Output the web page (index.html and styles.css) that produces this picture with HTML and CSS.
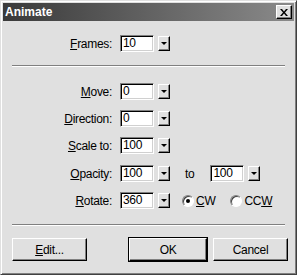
FILE: index.html
```html
<!DOCTYPE html>
<html lang="en">
<head>
  <meta charset="UTF-8">
  <title>Animate</title>
  <link rel="stylesheet" href="styles.css">
</head>
<body>
  <div class="window">
    <div class="titlebar">
      <span class="title">Animate</span>
      <button class="close-btn">
        <svg width="8" height="7" viewBox="0 0 8 7">
          <path d="M0 0 L2 0 L4 2.5 L6 0 L8 0 L5 3.5 L8 7 L6 7 L4 4.5 L2 7 L0 7 L3 3.5 Z" fill="#000"/>
        </svg>
      </button>
    </div>

    <div class="content">
      <div class="row row-frames">
        <label class="label"><u>F</u>rames:</label>
        <div class="field">10</div>
        <span class="drop"></span>
      </div>

      <div class="sep sep-top"></div>

      <div class="row row-first">
        <label class="label"><u>M</u>ove:</label>
        <div class="field">0</div>
        <span class="drop"></span>
      </div>
      <div class="row">
        <label class="label"><u>D</u>irection:</label>
        <div class="field">0</div>
        <span class="drop"></span>
      </div>
      <div class="row">
        <label class="label"><u>S</u>cale to:</label>
        <div class="field">100</div>
        <span class="drop"></span>
      </div>
      <div class="row row-opacity">
        <label class="label"><u>O</u>pacity:</label>
        <div class="field">100</div>
        <span class="drop"></span>
        <span class="to">to</span>
        <div class="field">100</div>
        <span class="drop"></span>
      </div>
      <div class="row">
        <label class="label"><u>R</u>otate:</label>
        <div class="field">360</div>
        <span class="drop"></span>
        <span class="radio checked"></span>
        <span class="radio-text"><u>C</u>W</span>
        <span class="radio radio-ccw"></span>
        <span class="radio-text">CC<u>W</u></span>
      </div>

      <div class="sep sep-bottom"></div>

      <div class="buttons">
        <button class="btn"><u>E</u>dit...</button>
        <span class="spacer"></span>
        <button class="btn btn-default">OK</button>
        <button class="btn">Cancel</button>
      </div>
    </div>
  </div>
</body>
</html>
```

FILE: styles.css
```css
body {
  margin: 0;
  background: #e0e0e0;
  font-family: "Liberation Sans", Arial, sans-serif;
  font-size: 12px;
  letter-spacing: -0.3px;
  color: #000;
}
.window {
  width: 297px;
  height: 275px;
  box-sizing: border-box;
  border: 1px solid;
  border-color: #e0e0e0 #404040 #404040 #e0e0e0;
  box-shadow: inset 1px 1px #fff, inset -1px -1px #808080;
  padding: 2px;
  background: #e0e0e0;
}
.titlebar {
  height: 18px;
  display: flex;
  align-items: center;
  justify-content: space-between;
  padding: 0 2px 0 2px;
  background: linear-gradient(90deg, #3a3a3a 0%, #8a8a8a 100%);
}
.title {
  color: #fff;
  font-weight: bold;
  font-size: 12px;
  letter-spacing: 0;
}
.close-btn {
  width: 16px;
  height: 14px;
  padding: 0;
  margin: 0;
  border: 1px solid;
  border-color: #fff #000 #000 #fff;
  box-shadow: inset -1px -1px #808080;
  background: #e0e0e0;
  display: flex;
  align-items: center;
  justify-content: center;
}
.content {
  padding: 0 0 0 6px;
}
.row {
  display: flex;
  align-items: center;
  height: 17px;
  margin-top: 10px;
}
.row-frames {
  margin-top: 14px;
}
.row-first {
  margin-top: 16px;
}
.row-opacity {
  margin-top: 11px;
}
.label {
  width: 100px;
  margin-left: 3px;
  margin-right: 8px;
  text-align: right;
}
.field {
  width: 34px;
  height: 17px;
  box-sizing: border-box;
  border: 1px solid;
  border-color: #808080 #fff #fff #808080;
  box-shadow: inset 1px 1px #000, inset -1px -1px #d0d0d0;
  background: #fff;
  padding: 0 2px;
  line-height: 15px;
}
.drop {
  width: 12px;
  height: 15px;
  box-sizing: border-box;
  margin-left: 4px;
  border: 1px solid;
  border-color: #fff #000 #000 #fff;
  box-shadow: inset -1px -1px #808080;
  background: #e0e0e0;
  position: relative;
}
.drop::after {
  content: "";
  position: absolute;
  left: 2px;
  top: 5px;
  border-left: 3px solid transparent;
  border-right: 3px solid transparent;
  border-top: 3px solid #000;
}
.to {
  margin-left: 15px;
  margin-right: 16px;
}
.radio {
  width: 12px;
  height: 12px;
  box-sizing: border-box;
  border-radius: 50%;
  border: 1px solid;
  border-color: #808080 #fff #fff #808080;
  box-shadow: inset 1px 1px #404040;
  background: #fff;
  margin-left: 12px;
  position: relative;
}
.radio.checked::after {
  content: "";
  position: absolute;
  left: 3px;
  top: 3px;
  width: 4px;
  height: 4px;
  border-radius: 50%;
  background: #000;
}
.radio-ccw {
  margin-left: 15px;
}
.radio-text {
  margin-left: 2px;
}
.sep {
  width: 273px;
  margin-left: 3px;
  height: 1px;
  background: #808080;
  border-bottom: 1px solid #fff;
}
.sep-top {
  margin-top: 13px;
}
.sep-bottom {
  margin-top: 15px;
}
.buttons {
  display: flex;
  align-items: center;
  margin-top: 12px;
  padding-left: 3px;
  width: 276px;
}
.spacer {
  flex: 1;
}
.btn {
  width: 75px;
  height: 23px;
  margin: 0;
  padding: 0;
  font-family: inherit;
  font-size: 12px;
  letter-spacing: -0.3px;
  color: #000;
  background: #e0e0e0;
  border: 1px solid;
  border-color: #fff #000 #000 #fff;
  box-shadow: inset -1px -1px #808080;
  margin-left: 6px;
}
.buttons .btn:first-child {
  margin-left: 0;
}
.btn-default {
  width: 78px;
  outline: 1px solid #000;
  outline-offset: 0;
}
```
